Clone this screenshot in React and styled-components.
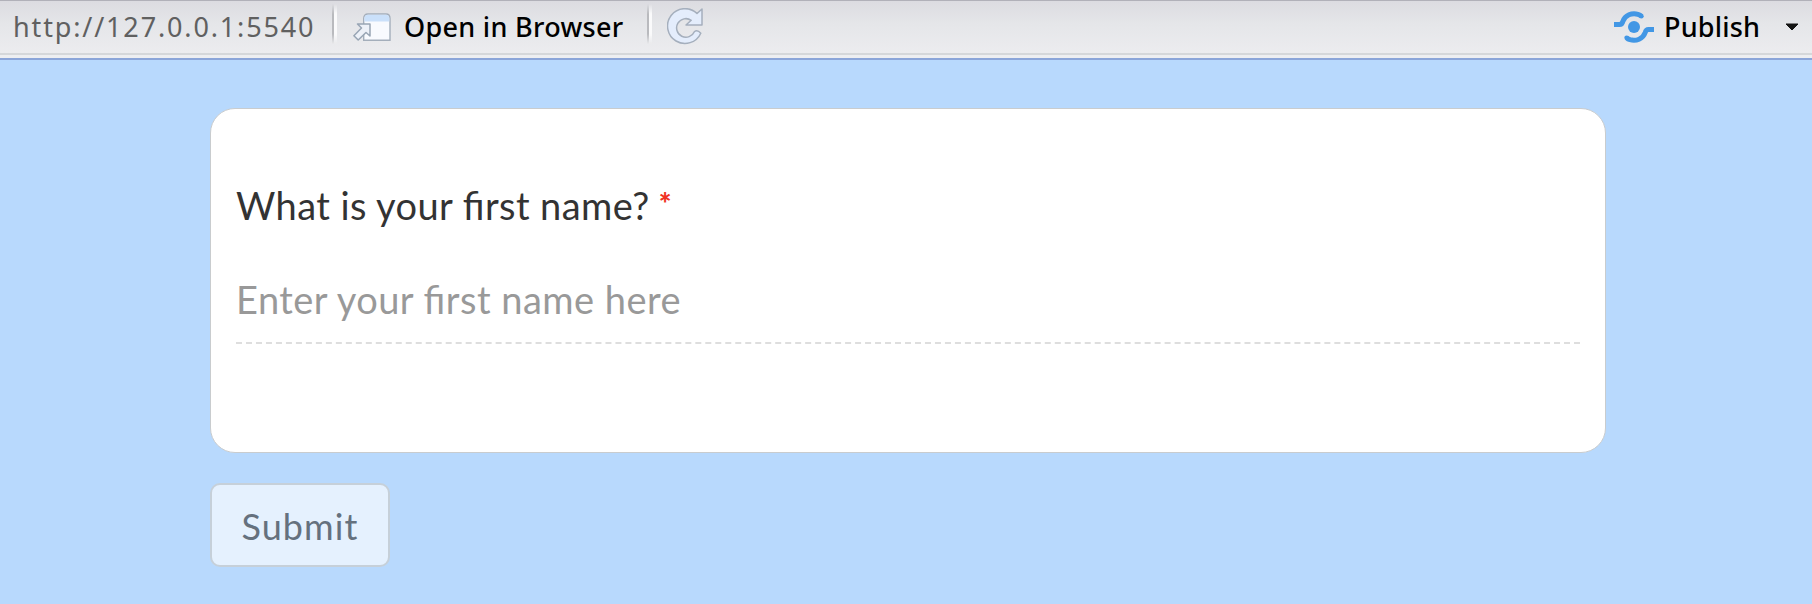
import React from "react";
import styled, { createGlobalStyle } from "styled-components";

const GlobalStyle = createGlobalStyle`
  * { box-sizing: border-box; }
  body { margin: 0; background: #b8d9fd; font-family: Lato, sans-serif; }
`;

const Page = styled.div`
  height: 604px;
  overflow: hidden;
`;

const Toolbar = styled.header`
  display: flex;
  align-items: center;
  height: 55px;
  padding: 0 13px 0 13px;
  border-top: 1px solid #b1b1b9;
  border-bottom: 2px solid #d5d7da;
  background: linear-gradient(#dcdce1, #e5e6e9 45%, #ececef);
  font-family: "Noto Sans", sans-serif;
  font-size: 27px;
  line-height: 52px;
  white-space: nowrap;
`;

const ToolbarEdge = styled.div`
  height: 5px;
  background: #edeef1;
  border-bottom: 2px solid #8ba5d9;
`;

const Address = styled.span`
  width: 319px;
  color: #606060;
  letter-spacing: 1.85px;
`;

const Separator = styled.i`
  width: 5px;
  height: 40px;
  align-self: flex-start;
  margin-top: 3px;
  background: linear-gradient(90deg, #b9babe 0 2px, #fafafb 2px 5px);
  mask-image: linear-gradient(transparent, #000 25%, #000 75%, transparent);
`;

const ToolButton = styled.button`
  display: flex;
  align-items: center;
  height: 52px;
  padding: 0;
  border: 0;
  background: none;
  color: #000;
  font: inherit;
  font-weight: 500;
  letter-spacing: ${(p) => p.$tracking || 0}px;
  gap: ${(p) => p.$gap || 0}px;
  margin-left: ${(p) => p.$left || 0};
`;

const OpenLabel = styled.span`
  width: 243px;
  text-align: left;
`;

const PublishLabel = styled.span`
  width: 121px;
  text-align: left;
`;

const Form = styled.form`
  width: 1396px;
  margin: 48px 0 0 210px;
`;

const Card = styled.section`
  height: 345px;
  padding: 72px 25px 0;
  border: 1px solid #c9ccce;
  border-radius: 25px;
  background: #fff;
`;

const Question = styled.label`
  display: flex;
  height: 50px;
  font-size: 38px;
  line-height: 49px;
  color: #333;
  letter-spacing: 0.42px;
  font-feature-settings: "liga" 1;
  white-space: nowrap;
`;

const Required = styled.span`
  margin-left: 9px;
  font-size: 30px;
  line-height: 44px;
  font-weight: 900;
  color: #f03224;
`;

const Field = styled.input`
  display: block;
  width: 100%;
  height: 72px;
  margin-top: 41px;
  padding: 0 0 17px;
  border: 0;
  border-bottom: 2px dashed #dedede;
  outline: 0;
  background: none;
  font: 38px Lato, sans-serif;
  letter-spacing: 0.48px;
  font-feature-settings: "liga" 1;
  &::placeholder { color: #999; opacity: 1; }
`;

const Submit = styled.button`
  display: block;
  width: 180px;
  height: 84px;
  margin: 30px 0 0;
  padding: 1px 0 0;
  border: 2px solid #c6d0d9;
  border-radius: 10px;
  background: #e5f1fe;
  color: #65717e;
  font: 36px Lato, sans-serif;
  letter-spacing: 1.1px;
`;

const OpenIcon = () => (
  <svg width="38" height="29" viewBox="0 0 38 29" fill="none">
    <path d="M10.7 27.3V5.5Q10.7 1 15 1H33Q37 1 37 5.5V27.3Z" fill="#f8fafe" stroke="#a4aebb" strokeWidth="1.4" />
    <path d="M11.4 8.5V5.5Q11.4 1.8 15 1.8H33Q36.3 1.8 36.3 5.5V8.5Z" fill="#cae0fa" />
    <path d="M4.5 11H17V23L13 19.5L5.2 27L.9 22.7L8.5 15Z" fill="#edf1f8" stroke="#98a5b4" strokeWidth="1.5" strokeLinejoin="round" />
  </svg>
);

const RefreshIcon = () => (
  <svg width="36" height="38" viewBox="0 0 36 38" fill="none">
    <path d="M35 1V17H19L24.2 12.3A9.3 9.3 0 1 0 27.5 23.5Q30.5 21.5 33.8 25.2A17.4 17.4 0 1 1 30 5.5Z" fill="#e4edfc" stroke="#a5afbd" strokeWidth="1.5" strokeLinejoin="round" />
  </svg>
);

const PublishIcon = () => (
  <svg width="40" height="32" viewBox="0 0 40 32" fill="none" stroke="#4297e5" strokeWidth="5">
    <circle cx="20" cy="16" r="6" fill="#4297e5" stroke="none" />
    <path d="M0 13.5H5.5Q8 13.5 8.8 10.5C11 4 18 1.5 24 3.3Q26 4 27.3 5.2" />
    <path d="M40 18.5H34.5Q32 18.5 31.2 21.5C29 28 22 30.5 16 28.7Q14 28 12.7 26.8" />
    <g fill="#4297e5" stroke="none">
      <circle cx="27.3" cy="5.2" r="2.4" />
      <circle cx="12.7" cy="26.8" r="2.4" />
    </g>
  </svg>
);

const CaretIcon = () => (
  <svg width="14" height="8" viewBox="0 0 14 8">
    <path d="M1 1H13L7 7Z" fill="#151515" stroke="#151515" strokeLinejoin="round" />
  </svg>
);

export default function App() {
  return (
    <Page>
      <GlobalStyle />
      <Toolbar>
        <Address>http://127.0.0.1:5540</Address>
        <Separator />
        <ToolButton type="button" $left="16px" $gap={13} $tracking={0.3}>
          <OpenIcon />
          <OpenLabel>Open in Browser</OpenLabel>
        </ToolButton>
        <Separator />
        <ToolButton type="button" $left="15px" aria-label="Refresh"><RefreshIcon /></ToolButton>
        <ToolButton type="button" $left="auto" $gap={10} $tracking={0.2}>
          <PublishIcon />
          <PublishLabel>Publish</PublishLabel>
        </ToolButton>
        <ToolButton type="button" aria-label="Publishing options"><CaretIcon /></ToolButton>
      </Toolbar>
      <ToolbarEdge />
      <Form onSubmit={(e) => e.preventDefault()}>
        <Card>
          <Question htmlFor="first-name">
            What is your first name?<Required>*</Required>
          </Question>
          <Field id="first-name" placeholder="Enter your first name here" />
        </Card>
        <Submit>Submit</Submit>
      </Form>
    </Page>
  );
}
